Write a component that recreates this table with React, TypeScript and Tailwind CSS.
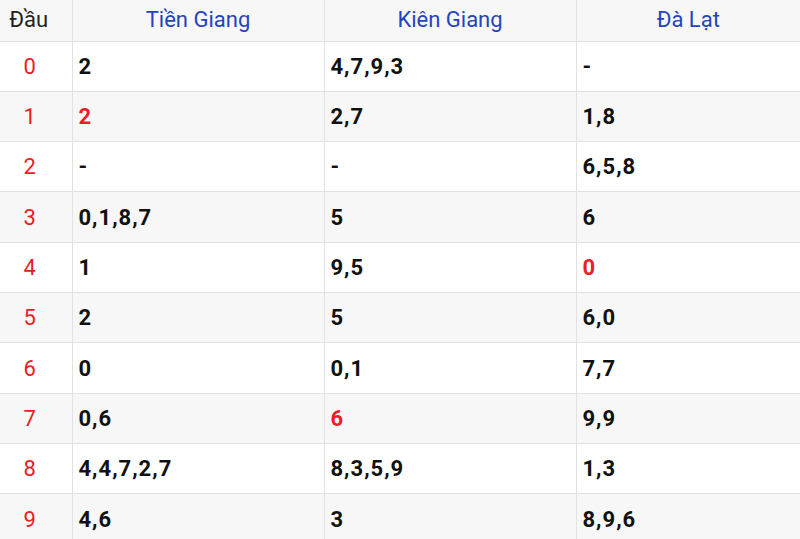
import React from "react";

const rows: [string, string, string, string][] = [
  ["0", "2", "4,7,9,3", "-"],
  ["1", "2", "2,7", "1,8"],
  ["2", "-", "-", "6,5,8"],
  ["3", "0,1,8,7", "5", "6"],
  ["4", "1", "9,5", "0"],
  ["5", "2", "5", "6,0"],
  ["6", "0", "0,1", "7,7"],
  ["7", "0,6", "6", "9,9"],
  ["8", "4,4,7,2,7", "8,3,5,9", "1,3"],
  ["9", "4,6", "3", "8,9,6"],
];

const red: Record<string, boolean> = { "1-1": true, "4-3": true, "7-2": true };

export default function App() {
  return (
    <div className="w-[800px] h-[539px] overflow-hidden bg-white" style={{ fontFamily: "Roboto, 'Liberation Sans', sans-serif" }}>
      <table className="w-[800px] border-collapse table-fixed">
        <colgroup>
          <col className="w-[72px]" />
          <col className="w-[252px]" />
          <col className="w-[252px]" />
          <col className="w-[224px]" />
        </colgroup>
        <thead>
          <tr className="h-[41px] bg-[#f7f7f7]">
            <th className="border-b border-r border-[#e2e2e2] font-normal text-[22px] text-[#222] text-center pr-[14px] pb-[2px]">Đầu</th>
            <th className="border-b border-r border-[#e2e2e2] font-normal text-[22px] text-[#2543bf] text-center pb-[2px]">Tiền Giang</th>
            <th className="border-b border-r border-[#e2e2e2] font-normal text-[22px] text-[#2543bf] text-center pb-[2px]">Kiên Giang</th>
            <th className="border-b border-[#e2e2e2] font-normal text-[22px] text-[#2543bf] text-center pb-[2px]">Đà Lạt</th>
          </tr>
        </thead>
        <tbody>
          {rows.map((r, i) => (
            <tr key={i} className={`h-[50.33px] ${i % 2 === 1 ? "bg-[#f7f7f7]" : "bg-white"}`}>
              <td className="border-b border-r border-[#e2e2e2] text-center pr-[12px] text-[22px] text-[#ee1c25]">{r[0]}</td>
              {[1, 2, 3].map((c) => (
                <td
                  key={c}
                  className={`border-b border-[#e2e2e2] pl-[6px] text-[22px] tracking-[1px] font-bold ${c < 3 ? "border-r" : ""} ${red[`${i}-${c}`] ? "text-[#ee1c25]" : "text-[#111]"}`}
                >
                  {r[c]}
                </td>
              ))}
            </tr>
          ))}
        </tbody>
      </table>
    </div>
  );
}
